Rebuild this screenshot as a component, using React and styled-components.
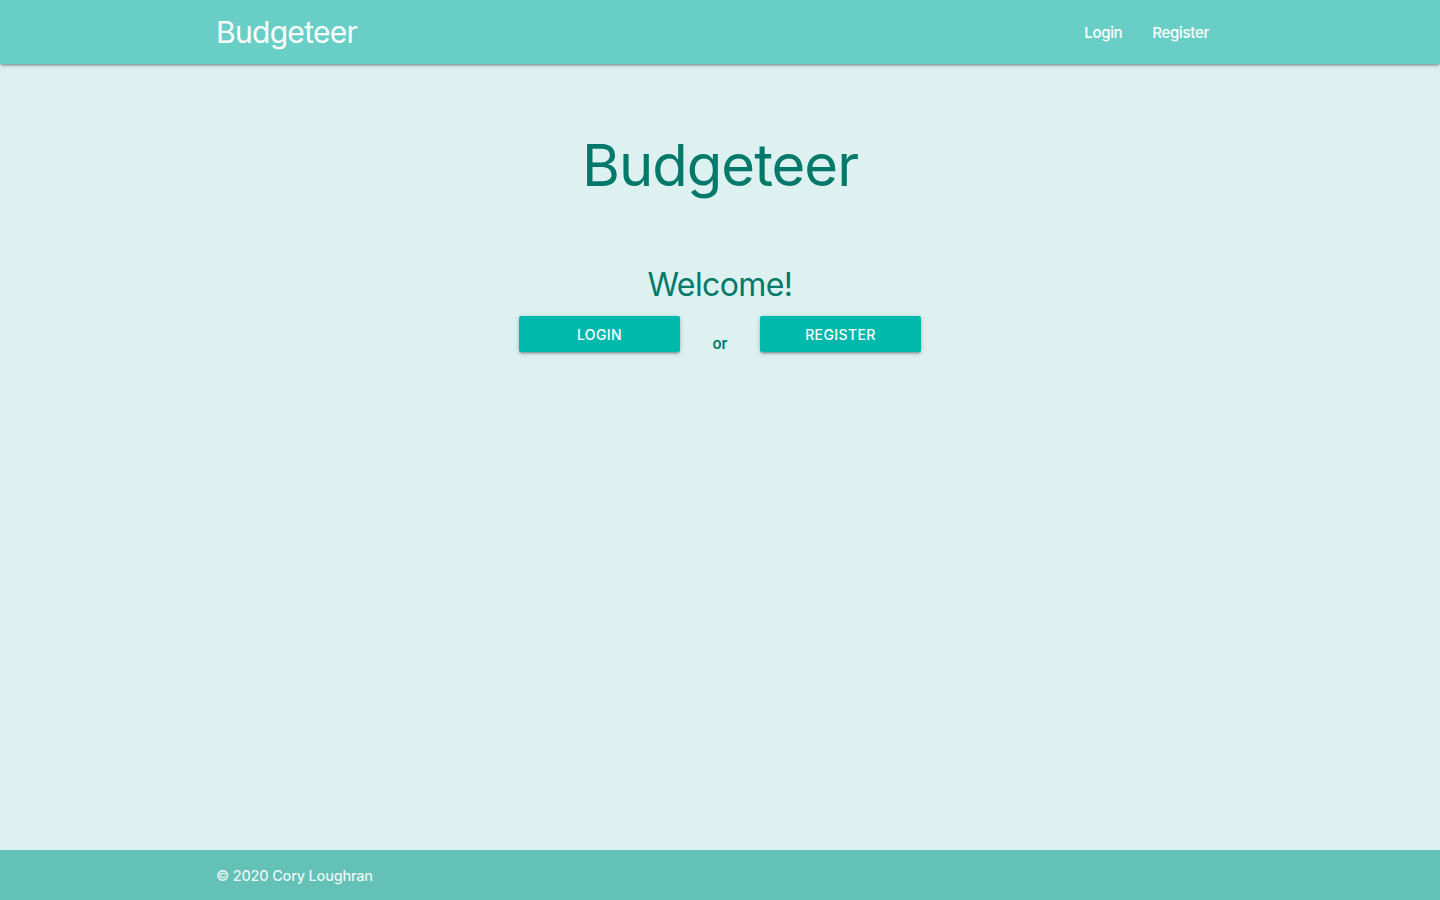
import styled, { createGlobalStyle } from "styled-components";

const GlobalStyle = createGlobalStyle`
  html, body {
    margin: 0;
    padding: 0;
  }
  body {
    font-family: Inter, "Noto Sans", Roboto, sans-serif;
    background: #ddf2f0;
  }
  * { box-sizing: border-box; }
`;

const Page = styled.div`
  display: flex;
  flex-direction: column;
  min-height: 100vh;
`;

const Nav = styled.nav`
  height: 64px;
  background: #69cec6;
  box-shadow: 0 2px 2px 0 rgba(0, 0, 0, 0.14), 0 3px 1px -2px rgba(0, 0, 0, 0.12),
    0 1px 5px 0 rgba(0, 0, 0, 0.2);
  position: relative;
  z-index: 2;
`;

const Container = styled.div`
  width: 70%;
  margin: 0 auto;
  height: 100%;
  display: flex;
  align-items: center;
  justify-content: space-between;
`;

const Brand = styled.a`
  color: #fff;
  font-size: 30px;
  font-weight: 400;
  letter-spacing: -0.7px;
  text-decoration: none;
  line-height: 64px;
`;

const NavLinks = styled.ul`
  list-style: none;
  margin: 0;
  padding: 0;
  display: flex;
`;

const NavLink = styled.a`
  display: block;
  padding: 2px 15px 0;
  color: #fff;
  font-size: 15px;
  font-weight: 500;
  letter-spacing: -0.3px;
  line-height: 62px;
  text-decoration: none;
`;

const Main = styled.main`
  flex: 1;
  display: flex;
  flex-direction: column;
  align-items: center;
`;

const Title = styled.h1`
  margin: 65px 0 0;
  font-size: 58px;
  font-weight: 400;
  letter-spacing: -1px;
  line-height: 72px;
  color: #00796b;
`;

const Welcome = styled.h4`
  margin: 64px 0 0;
  font-size: 32px;
  font-weight: 400;
  letter-spacing: -0.6px;
  line-height: 40px;
  color: #00796b;
`;

const ButtonRow = styled.div`
  display: flex;
  align-items: flex-start;
  margin-top: 11px;
`;

const Button = styled.button`
  width: 161px;
  height: 36px;
  border: none;
  border-radius: 2px;
  background: #00b9ad;
  color: #fff;
  font-family: inherit;
  font-size: 14px;
  font-weight: 500;
  letter-spacing: 0.4px;
  text-transform: uppercase;
  cursor: pointer;
  box-shadow: 0 2px 2px 0 rgba(0, 0, 0, 0.14), 0 3px 1px -2px rgba(0, 0, 0, 0.12),
    0 1px 5px 0 rgba(0, 0, 0, 0.2);
`;

const Or = styled.span`
  width: 80px;
  text-align: center;
  padding-top: 18px;
  font-size: 15px;
  font-weight: 600;
  color: #00796b;
`;

const Footer = styled.footer`
  height: 50px;
  background: #64c1b8;
`;

const FooterText = styled.span`
  color: rgba(255, 255, 255, 0.9);
  font-size: 14.5px;
  font-weight: 500;
  letter-spacing: -0.2px;
`;

export default function App() {
  return (
    <Page>
      <GlobalStyle />
      <Nav>
        <Container>
          <Brand href="#">Budgeteer</Brand>
          <NavLinks>
            <li><NavLink href="#">Login</NavLink></li>
            <li><NavLink href="#">Register</NavLink></li>
          </NavLinks>
        </Container>
      </Nav>
      <Main>
        <Title>Budgeteer</Title>
        <Welcome>Welcome!</Welcome>
        <ButtonRow>
          <Button>Login</Button>
          <Or>or</Or>
          <Button>Register</Button>
        </ButtonRow>
      </Main>
      <Footer>
        <Container>
          <FooterText>© 2020 Cory Loughran</FooterText>
        </Container>
      </Footer>
    </Page>
  );
}
